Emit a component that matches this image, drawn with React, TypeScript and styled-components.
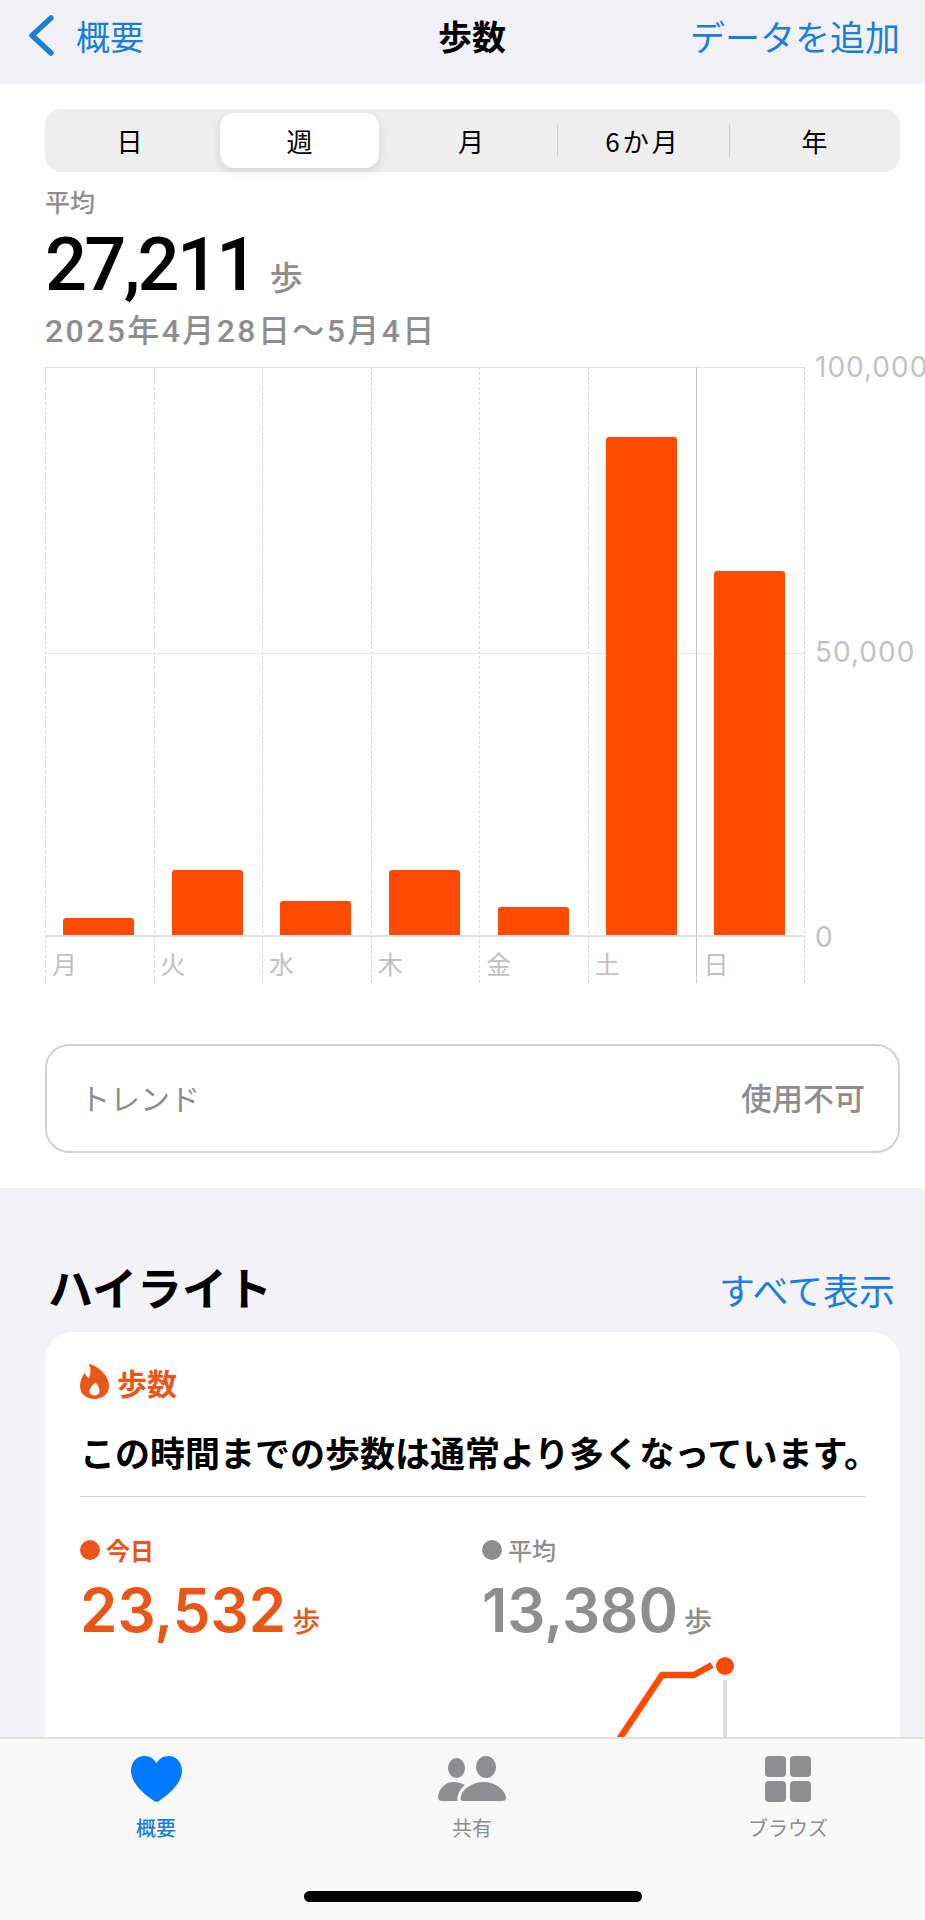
import React from 'react';
import styled, { createGlobalStyle } from 'styled-components';

const sans = `Inter, "Noto Sans CJK JP", sans-serif`;
const jp = `"Noto Sans CJK JP", sans-serif`;
const orange = '#ff4b00';
const textOrange = '#e8561a';
const grey = '#8e8e90';
const blue = '#1c7ed6';

const GlobalStyle = createGlobalStyle`
  html, body {
    margin: 0;
    padding: 0;
    background: #f2f2f7;
  }
  * {
    box-sizing: border-box;
  }
`;

const Screen = styled.div`
  position: relative;
  width: 925px;
  height: 1920px;
  overflow: hidden;
  background: #f2f2f7;
  font-family: ${sans};
  color: #000;
`;

const NavBar = styled.header`
  height: 84px;
  padding: 0 25px 14px 28px;
  display: grid;
  grid-template-columns: 410px auto 1fr;
  align-items: center;
  background: #f1f1f5;
  font-family: ${jp};
  font-size: 34px;
`;

const BackLink = styled.div`
  display: flex;
  align-items: center;
  gap: 22px;
  color: ${blue};
`;

const NavTitle = styled.div`
  font-weight: 700;
`;

const NavAction = styled.div`
  justify-self: end;
  font-size: 35px;
  color: ${blue};
  white-space: nowrap;
`;

const ChartSection = styled.section`
  background: #fff;
  padding: 25px 25px 35px 45px;
`;

const Segments = styled.div`
  height: 63px;
  width: 855px;
  display: grid;
  grid-template-columns: 169px 171px 172px 172px 171px;
  border-radius: 16px;
  background: #eeeeef;
  font-family: ${jp};
  font-size: 26px;
`;

const Segment = styled.div<{ $active?: boolean; $divided?: boolean; $spaced?: boolean }>`
  position: relative;
  display: flex;
  align-items: center;
  justify-content: center;
  ${p => p.$spaced && 'letter-spacing: 3px;'}
  ${p => p.$active && `
    margin: 4px 6px 4px 6px;
    border-radius: 14px;
    background: #fff;
    box-shadow: 0 3px 8px rgba(0, 0, 0, 0.12);
  `}
  ${p => p.$divided && `
    &::before {
      content: '';
      position: absolute;
      left: 0;
      top: 15px;
      bottom: 15px;
      width: 1px;
      background: #cfcfd2;
    }
  `}
`;

const AverageLabel = styled.div`
  margin-top: 14px;
  font-family: ${jp};
  font-size: 25px;
  line-height: 30px;
  font-weight: 500;
  color: ${grey};
`;

const AverageRow = styled.div`
  margin-top: 12px;
  display: flex;
  align-items: baseline;
  gap: 14px;
  height: 74px;
  line-height: 74px;
`;

const AverageValue = styled.div`
  font-family: Roboto, sans-serif;
  font-size: 74px;
  font-weight: 500;
  letter-spacing: -2.7px;
`;

const AverageUnit = styled.div`
  font-family: ${jp};
  font-size: 33px;
  font-weight: 500;
  color: ${grey};
`;

const DateRange = styled.div`
  margin-top: 11px;
  font-family: Roboto, ${jp};
  font-size: 32px;
  line-height: 36px;
  font-weight: 500;
  letter-spacing: 2.4px;
  color: ${grey};
`;

const Chart = styled.div`
  margin-top: 18px;
  display: flex;
`;

const Days = styled.div`
  flex: none;
  width: 760px;
  display: grid;
  grid-template-columns: repeat(7, 1fr);
  grid-template-rows: 570px 46px;
`;

const DayColumn = styled.div<{ $now?: boolean; $last?: boolean }>`
  display: grid;
  grid-row: span 2;
  grid-template-rows: subgrid;
  border-left: 1px ${p => (p.$now ? 'solid #c9c9cc' : 'dashed #d9d9dc')};
  ${p => p.$last && 'border-right: 1px dashed #d9d9dc;'}
`;

const BarSlot = styled.div`
  display: flex;
  align-items: flex-end;
  justify-content: center;
  padding-right: 2px;
  border-top: 1px solid #e3e3e6;
  border-bottom: 2px solid #e0e0e3;
  background: linear-gradient(#e8e8ea, #e8e8ea) 0 285px / 100% 1px no-repeat;
`;

const Bar = styled.div`
  width: 71px;
  background: ${orange};
  border-radius: 3px 3px 0 0;
`;

const DayLabel = styled.div`
  padding: 8px 0 0 6px;
  font-family: ${jp};
  font-size: 25px;
  line-height: 36px;
  color: #c0c0c3;
`;

const Axis = styled.div`
  flex: none;
  height: 600px;
  margin: -15px 0 0 10px;
  display: flex;
  flex-direction: column;
  justify-content: space-between;
  font-size: 28px;
  line-height: 30px;
  letter-spacing: 1px;
  color: #c2c2c5;
  white-space: nowrap;
`;

const TrendCard = styled.div`
  margin-top: 61px;
  width: 855px;
  height: 109px;
  padding: 0 33px 4px;
  display: flex;
  align-items: center;
  justify-content: space-between;
  border: 2px solid #d2d2d4;
  border-radius: 24px;
  font-family: ${jp};
  font-size: 30px;
  color: ${grey};
`;

const TrendStatus = styled.span`
  font-size: 31px;
  font-weight: 500;
`;

const HighlightHeader = styled.div`
  margin: 70px 30px 14px 48px;
  padding-bottom: 4px;
  display: flex;
  align-items: center;
  justify-content: space-between;
  height: 60px;
  font-family: ${jp};
`;

const HighlightTitle = styled.h2`
  margin: 0;
  font-size: 45px;
  font-weight: 700;
`;

const ShowAll = styled.a`
  font-size: 36px;
  color: ${blue};
  padding-top: 6px;
`;

const HighlightCard = styled.article`
  margin: 0 25px 0 45px;
  height: 560px;
  padding: 32px 35px;
  border-radius: 28px;
  background: #fff;
  font-family: ${jp};
`;

const CardTag = styled.div`
  height: 35px;
  display: flex;
  align-items: center;
  gap: 8px;
  font-size: 30px;
  font-weight: 700;
  color: ${textOrange};
`;

const Headline = styled.div`
  margin-top: 31px;
  font-size: 35px;
  line-height: 44px;
  font-weight: 700;
  white-space: nowrap;
`;

const Divider = styled.hr`
  margin: 22px 0 0;
  border: 0;
  border-top: 1px solid #d8d8da;
`;

const Stats = styled.div`
  margin-top: 38px;
  display: grid;
  grid-template-columns: 402px 1fr;
`;

const StatLabel = styled.div<{ $color: string; $bold?: boolean }>`
  display: flex;
  align-items: center;
  gap: 6px;
  font-size: 24px;
  line-height: 30px;
  font-weight: ${p => (p.$bold ? 700 : 500)};
  color: ${p => p.$color};
  &::before {
    content: '';
    width: 20px;
    height: 20px;
    border-radius: 50%;
    background: ${p => p.$color};
  }
`;

const StatValue = styled.div<{ $color: string }>`
  margin-top: 14px;
  display: flex;
  align-items: baseline;
  gap: 6px;
  height: 62px;
  line-height: 62px;
  color: ${p => p.$color};
`;

const StatNumber = styled.span`
  font-family: Inter, sans-serif;
  font-size: 60px;
  font-weight: 600;
`;

const StatUnit = styled.span`
  font-size: 28px;
  font-weight: 500;
`;

const TrendLine = styled.svg`
  display: block;
  margin-top: 9px;
`;

const TabBar = styled.nav`
  position: absolute;
  left: 0;
  right: 0;
  bottom: 0;
  height: 183px;
  padding-top: 17px;
  display: flex;
  flex-direction: column;
  align-items: flex-start;
  border-top: 2px solid #dfdfe1;
  background: #f8f8f8;
  font-family: ${jp};
`;

const Tabs = styled.div`
  display: grid;
  grid-template-columns: repeat(3, 312px);
  column-gap: 4px;
`;

const Tab = styled.div<{ $active?: boolean }>`
  display: flex;
  flex-direction: column;
  align-items: center;
  gap: 13px;
  font-size: 20px;
  line-height: 26px;
  font-weight: ${p => (p.$active ? 500 : 400)};
  color: ${p => (p.$active ? blue : grey)};
`;

const HomeIndicator = styled.div`
  margin: 50px 0 0 304px;
  width: 338px;
  height: 11px;
  border-radius: 6px;
  background: #000;
`;

const ChevronLeft = () => (
  <svg width="26" height="41" viewBox="0 0 26 41" fill="none">
    <path d="M23 3L4 20.5L23 38" stroke={blue} strokeWidth="5.5" strokeLinecap="round" strokeLinejoin="round" />
  </svg>
);

const Flame = () => (
  <svg width="29" height="35" viewBox="0 0 29 35">
    <path
      fillRule="evenodd"
      fill={textOrange}
      d="M9 0C18 2 29 11 29 22C29 30 22.500 35 14.500 35C6.500 35 0 30 0 22C0 17 2 12 5 9C6 12 7 13 9 14C11 9 11 5 9 0ZM15.500 18.500C12.500 21 9.500 24 9.500 27C9.500 29.800 11.800 31.500 14.500 31.500C17.200 31.500 19.500 29.800 19.500 27C19.500 24 18 21 15.500 18.500Z"
    />
  </svg>
);

const Heart = () => (
  <svg width="51" height="46" viewBox="0 0 51 46" fill="#007aff">
    <path d="M25.500 46C24.500 46 23.500 45.400 22 44.300C9 35 0 25.500 0 14.500C0 6 6 0 13.500 0C18.800 0 23 2.800 25.500 7.200C28 2.800 32.200 0 37.500 0C45 0 51 6 51 14.500C51 25.500 42 35 29 44.300C27.500 45.400 26.500 46 25.500 46Z" />
  </svg>
);

const People = () => (
  <svg width="68" height="46" viewBox="0 0 68 46" fill={grey}>
    <ellipse cx="18.500" cy="12" rx="8.500" ry="10" />
    <ellipse cx="48" cy="11" rx="10" ry="11" />
    <path d="M0 41C1 32 8 26 15 26C19 26 23 27 27 29C22 33 19 38 19.500 45H4C1.500 45 0 43.500 0 41Z" />
    <path d="M22.500 42C24 32 36 26 46 26C57 26 66 33 68 41C68 44 66.500 45 64 45H26C23.500 45 22.300 44 22.500 42Z" />
  </svg>
);

const BrowseGrid = () => (
  <svg width="46" height="46" viewBox="0 0 46 46" fill={grey}>
    <rect x="0" y="0" width="21" height="21" rx="4" />
    <rect x="25" y="0" width="21" height="21" rx="4" />
    <rect x="0" y="25" width="21" height="21" rx="4" />
    <rect x="25" y="25" width="21" height="21" rx="4" />
  </svg>
);

const week = [
  { day: '月', top: 918 },
  { day: '火', top: 870 },
  { day: '水', top: 901 },
  { day: '木', top: 870 },
  { day: '金', top: 907 },
  { day: '土', top: 437 },
  { day: '日', top: 571 },
];

const App: React.FC = () => (
  <Screen>
    <GlobalStyle />
    <NavBar>
      <BackLink>
        <ChevronLeft />
        概要
      </BackLink>
      <NavTitle>歩数</NavTitle>
      <NavAction>データを追加</NavAction>
    </NavBar>

    <ChartSection>
      <Segments>
        <Segment>日</Segment>
        <Segment $active>週</Segment>
        <Segment>月</Segment>
        <Segment $divided $spaced>6か月</Segment>
        <Segment $divided>年</Segment>
      </Segments>

      <AverageLabel>平均</AverageLabel>
      <AverageRow>
        <AverageValue>27,211</AverageValue>
        <AverageUnit>歩</AverageUnit>
      </AverageRow>
      <DateRange>2025年4月28日〜5月4日</DateRange>

      <Chart>
        <Days>
          {week.map((d, i) => (
            <DayColumn key={d.day} $now={i === 6} $last={i === 6}>
              <BarSlot>
                <Bar style={{ height: 935 - d.top }} />
              </BarSlot>
              <DayLabel>{d.day}</DayLabel>
            </DayColumn>
          ))}
        </Days>
        <Axis>
          <div>100,000</div>
          <div>50,000</div>
          <div>0</div>
        </Axis>
      </Chart>

      <TrendCard>
        <span>トレンド</span>
        <TrendStatus>使用不可</TrendStatus>
      </TrendCard>
    </ChartSection>

    <HighlightHeader>
      <HighlightTitle>ハイライト</HighlightTitle>
      <ShowAll>すべて表示</ShowAll>
    </HighlightHeader>

    <HighlightCard>
      <CardTag>
        <Flame />
        歩数
      </CardTag>
      <Headline>この時間までの歩数は通常より多くなっています。</Headline>
      <Divider />
      <Stats>
        <div>
          <StatLabel $color={textOrange} $bold>今日</StatLabel>
          <StatValue $color={textOrange}>
            <StatNumber>23,532</StatNumber>
            <StatUnit>歩</StatUnit>
          </StatValue>
        </div>
        <div>
          <StatLabel $color={grey}>平均</StatLabel>
          <StatValue $color={grey}>
            <StatNumber>13,380</StatNumber>
            <StatUnit>歩</StatUnit>
          </StatValue>
        </div>
      </Stats>
      <TrendLine width="785" height="110" viewBox="0 0 785 110">
        <path d="M532 100L582 25H614L632 15" fill="none" stroke={orange} strokeWidth="6.500" strokeLinejoin="round" />
        <circle cx="645" cy="16" r="9" fill={orange} />
        <rect x="643" y="30" width="4" height="70" fill="#dcdcde" />
      </TrendLine>
    </HighlightCard>

    <TabBar>
      <Tabs>
        <Tab $active>
          <Heart />
          概要
        </Tab>
        <Tab>
          <People />
          共有
        </Tab>
        <Tab>
          <BrowseGrid />
          ブラウズ
        </Tab>
      </Tabs>
      <HomeIndicator />
    </TabBar>
  </Screen>
);

export default App;
